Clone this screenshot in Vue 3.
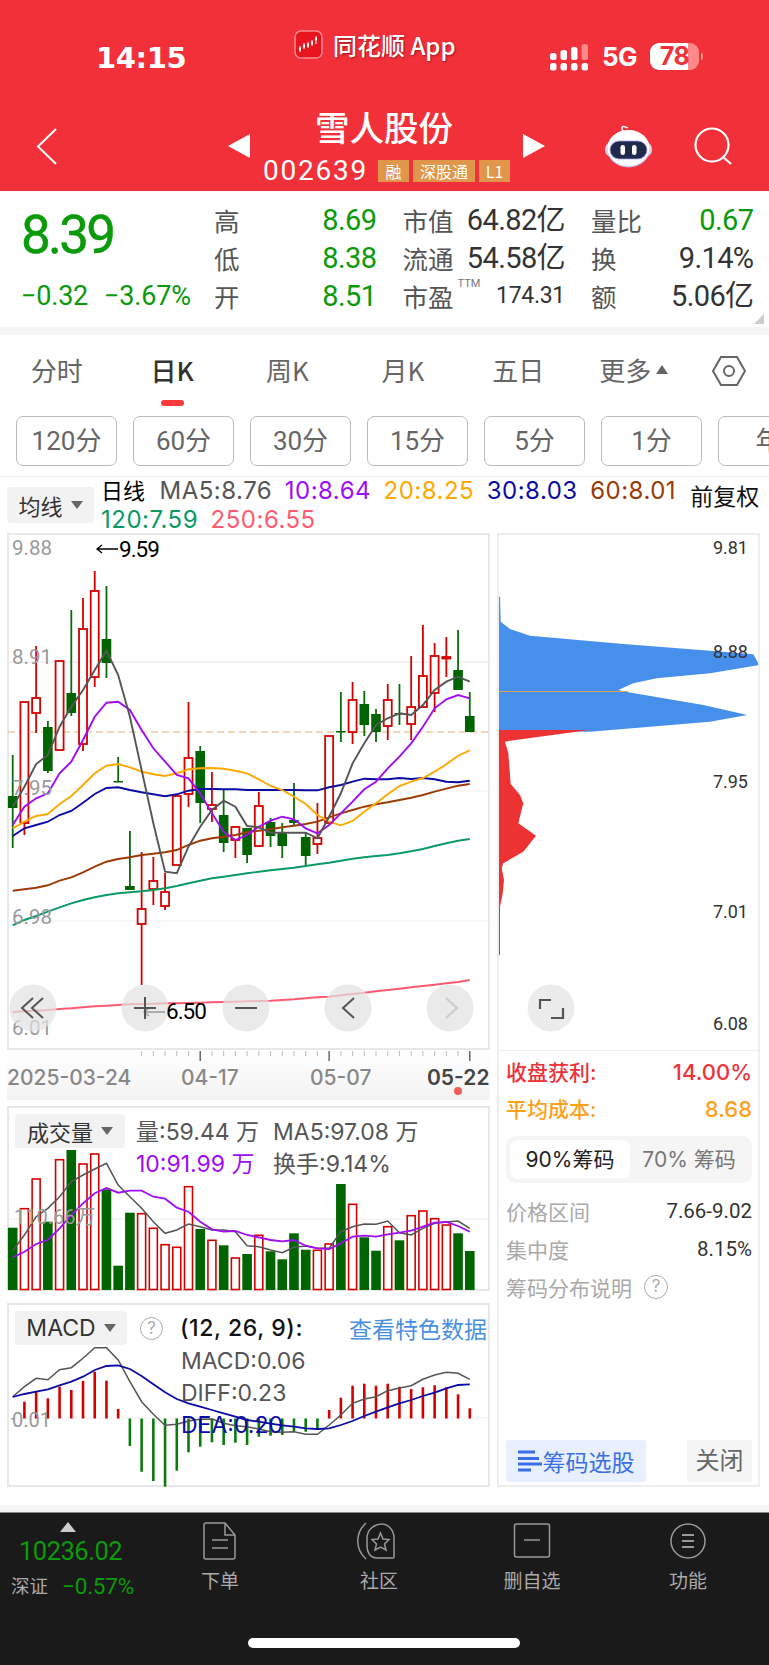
<template>
  <div class="page">
    <header class="header">
      <div class="status-bar">
        <span class="time">14:15</span>
        <div class="app-name">
          <svg class="app-logo" width="29" height="29" viewBox="0 0 29 29">
            <rect x="1" y="1" width="27" height="27" rx="6" fill="#e8141f" stroke="#f98a8f" stroke-width="1.5" />
            <path d="M5 19h2M9 16h2M13 15h2M17 13h2M21 9h2" stroke="#fff" stroke-width="3" />
            <path d="M6 16v6M10 13v6M14 12v6M18 10v6M22 6v8" stroke="#fff" stroke-width="1" />
          </svg>
          <span>同花顺 App</span>
        </div>
        <div class="signal">
          <svg width="38" height="27" viewBox="0 0 38 27">
            <g fill="#fff">
              <rect x="0" y="9" width="6.500" height="7" rx="2.500" />
              <rect x="0" y="19" width="6.500" height="7.500" rx="2.500" />
              <rect x="10.500" y="6" width="6.500" height="10" rx="2.500" />
              <rect x="10.500" y="19" width="6.500" height="7.500" rx="2.500" />
              <rect x="21" y="3" width="6.500" height="13" rx="2.500" />
              <rect x="21" y="19" width="6.500" height="7.500" rx="2.500" />
              <rect x="31.500" y="19" width="6.500" height="7.500" rx="2.500" />
            </g>
            <rect x="31.500" y="0" width="6.500" height="16" rx="2.500" fill="#f88" />
          </svg>
        </div>
        <span class="net">5G</span>
        <div class="battery"><span>78</span></div>
      </div>

      <div class="nav">
        <svg class="back" width="21" height="37" viewBox="0 0 21 37">
          <polyline points="20,1 2,18.5 20,36" fill="none" stroke="#fff" stroke-width="2" />
        </svg>
        <svg class="prev" width="22" height="24" viewBox="0 0 22 24"><polygon points="22,0 22,24 0,12" fill="#fff" /></svg>
        <div class="stock">
          <div class="stock-name">雪人股份</div>
          <div class="stock-code">
            <span class="code">002639</span>
            <span class="tag tag-1">融</span>
            <span class="tag tag-3">深股通</span>
            <span class="tag tag-1">L1</span>
          </div>
        </div>
        <svg class="next" width="22" height="24" viewBox="0 0 22 24"><polygon points="0,0 0,24 22,12" fill="#fff" /></svg>
        <svg class="robot" width="47" height="44" viewBox="0 0 47 44">
          <path d="M18 7c-1.500-2-1.500-4 0-4.500s3 1 5 1.500" fill="none" stroke="#f1eefb" stroke-width="1.600" />
          <rect x="0" y="18" width="47" height="15" rx="7" fill="#d8d6ea" />
          <ellipse cx="23.500" cy="25" rx="21.500" ry="18.500" fill="#c9bdf5" />
          <ellipse cx="23.500" cy="24" rx="21" ry="18" fill="#fff" />
          <rect x="5" y="17" width="37" height="18" rx="9" fill="#1f2a4a" stroke="#a99cf0" stroke-width="0.800" />
          <rect x="15.500" y="21" width="4.500" height="10" rx="2.200" fill="#fff" />
          <rect x="27" y="21" width="4.500" height="10" rx="2.200" fill="#fff" />
        </svg>
        <svg class="search" width="39" height="38" viewBox="0 0 39 38">
          <circle cx="18" cy="18" r="16.5" fill="none" stroke="#fff" stroke-width="2.2" />
          <line x1="29" y1="30" x2="37" y2="37" stroke="#fff" stroke-width="2.2" />
        </svg>
      </div>
    </header>

    <section class="quote">
      <div class="quote-main">
        <div class="last-price">8.39</div>
        <div class="change"><span>−0.32</span><span>−3.67%</span></div>
      </div>
      <div class="quote-grid">
        <div v-for="item in quoteCells" :key="item.label" class="cell">
          <span class="cell-label">{{ item.label }}</span>
          <span v-if="item.ttm" class="ttm">TTM</span>
          <span class="cell-value" :class="[item.tone, { small: item.ttm }]">{{ item.value }}</span>
        </div>
      </div>
      <i class="corner"></i>
    </section>

    <div class="band"></div>

    <nav class="tabs">
      <div v-for="tab in tabs" :key="tab" class="tab" :class="{ active: tab === '日K' }">
        <span class="tab-text">{{ tab }}<i v-if="tab === '更多'" class="tab-caret"></i></span>
        <i class="tab-bar"></i>
      </div>
      <svg class="hex" width="34" height="30" viewBox="0 0 34 30">
        <polygon points="1,15 9,1 25,1 33,15 25,29 9,29" fill="none" stroke="#666" stroke-width="2" />
        <circle cx="17" cy="15" r="5" fill="none" stroke="#666" stroke-width="2" />
      </svg>
    </nav>

    <div class="periods">
      <span v-for="p in periods" :key="p" class="period">{{ p }}</span>
    </div>

    <div class="legend-row">
      <div class="select select-ma">均线<i class="caret"></i></div>
      <div class="legend">
        <div class="legend-line">
          <span class="legend-title">日线</span>
          <span style="color: #555">MA5:8.76</span>
          <span style="color: #a00cf5">10:8.64</span>
          <span style="color: #ffa800">20:8.25</span>
          <span style="color: #0a0aa5">30:8.03</span>
          <span style="color: #9c3a05">60:8.01</span>
        </div>
        <div class="legend-line">
          <span style="color: #0a9a64">120:7.59</span>
          <span style="color: #ff5a70">250:6.55</span>
        </div>
      </div>
      <span class="adjust">前复权</span>
    </div>

    <div class="charts">
      <div class="left-col">
        <svg class="kline" width="483" height="517" viewBox="7 533 483 517">
          <rect x="8" y="534" width="481" height="515" fill="#fff" stroke="#e8e8e8" stroke-width="2" />
          <line x1="8" y1="662" x2="489" y2="662" stroke="#eee" stroke-width="1.5" />
          <line x1="8" y1="791" x2="489" y2="791" stroke="#f0f0f0" />
          <line x1="8" y1="921" x2="489" y2="921" stroke="#f0f0f0" />
          <line x1="8" y1="732" x2="489" y2="732" stroke="#e3b27c" stroke-dasharray="7 4" />

          <g v-for="c in candles" :key="c.i">
            <line :x1="c.x" :x2="c.x" :y1="c.high" :y2="c.low" :stroke="c.up ? '#d40000' : '#0a6b0a'" stroke-width="1.8" />
            <rect v-if="c.up" :x="c.x - 4" :y="c.top" width="8" :height="c.bottom - c.top" fill="#fff" stroke="#d40000" stroke-width="1.8" />
            <rect v-else :x="c.x - 4.8" :y="c.top" width="9.6" :height="Math.max(c.bottom - c.top, 1.5)" fill="#006400" />
          </g>

          <polyline v-for="l in maLines" :key="l.color" :points="l.points" fill="none" :stroke="l.color" stroke-width="1.9" />

          <g class="axis-left">
            <text x="12" y="555">9.88</text>
            <text x="12" y="664">8.91</text>
            <text x="12" y="795">7.95</text>
            <text x="12" y="924">6.98</text>
            <text x="12" y="1035">6.01</text>
          </g>
          <path d="M97 549h21M102 545l-5 4 5 4" fill="none" stroke="#000" stroke-width="1.3" />
          <text class="mark" x="119" y="557">9.59</text>

          <g fill="#e2e2e2" fill-opacity="0.72">
            <circle cx="33" cy="1008" r="23.5" />
            <circle cx="145" cy="1008" r="23.5" />
            <circle cx="246" cy="1008" r="23.5" />
            <circle cx="348" cy="1008" r="23.5" />
            <circle cx="450" cy="1008" r="23.5" />
          </g>
          <path d="M144 1012h21M149 1008l-5 4 5 4" fill="none" stroke="#999" stroke-width="1.3" />
          <text class="mark" x="166" y="1019">6.50</text>
          <g fill="none" stroke="#555" stroke-width="2">
            <path d="M33 998l-11 10 11 10M43 998l-11 10 11 10" />
            <path d="M134 1008h22M145 997v22" />
            <path d="M235 1008h22" />
            <path d="M354 998l-11 10 11 10" />
            <path d="M446 998l11 10-11 10" stroke="#ccc" />
          </g>
        </svg>

        <svg class="dates" width="483" height="50" viewBox="7 1050 483 50">
          <line v-for="t in ticks" :key="t.x" :x1="t.x" :x2="t.x" y1="1051" :y2="t.major ? 1061 : 1056" :stroke="t.major ? '#666' : '#bbb'" :stroke-width="t.major ? 1.5 : 1" />
          <text x="7" y="1085">2025-03-24</text>
          <text x="181" y="1085">04-17</text>
          <text x="310" y="1085">05-07</text>
          <text class="date-now" x="427" y="1085">05-22</text>
          <circle cx="458" cy="1091" r="4" fill="#f45b5b" />
        </svg>

        <div class="sub-chart vol-chart">
          <svg class="sub-canvas" width="483" height="185" viewBox="7 1106 483 185">
            <line x1="8" y1="1219" x2="489" y2="1219" stroke="#eee" />
            <g v-for="b in volBars" :key="b.x">
              <rect v-if="b.up" :x="b.x - 4" :y="b.top" width="8" :height="1289.5 - b.top" fill="#fff" stroke="#d40000" stroke-width="1.6" />
              <rect v-else :x="b.x - 4.8" :y="b.top" width="9.6" :height="1290 - b.top" fill="#006400" />
            </g>
            <polyline :points="volMa5" fill="none" stroke="#555" stroke-width="1.5" />
            <polyline :points="volMa10" fill="none" stroke="#a00cf5" stroke-width="1.8" />
            <text class="sub-axis" x="14" y="1224">110.66万</text>
          </svg>
          <div class="sub-head">
            <div class="select select-vol">成交量<i class="caret"></i></div>
            <div class="vol-legend">
              <span>量:59.44 万</span>
              <span>MA5:97.08 万</span>
              <span style="color: #a00cf5">10:91.99 万</span>
              <span>换手:9.14%</span>
            </div>
          </div>
        </div>

        <div class="sub-chart macd-chart">
          <svg class="sub-canvas" width="483" height="184" viewBox="7 1303 483 184">
            <line x1="8" y1="1418" x2="489" y2="1418" stroke="#eee" />
            <line v-for="b in macdBars" :key="b.x" :x1="b.x" :x2="b.x" y1="1418.5" :y2="b.end" :stroke="b.up ? '#d40000' : '#0a7a0a'" stroke-width="2.6" />
            <polyline :points="macdDiff" fill="none" stroke="#555" stroke-width="1.5" />
            <polyline :points="macdDea" fill="none" stroke="#0a0aa5" stroke-width="1.8" />
            <text class="sub-axis" x="12" y="1427">0.01</text>
          </svg>
          <div class="macd-head">
            <div class="select select-macd">MACD<i class="caret"></i></div>
            <span class="help help-macd">?</span>
            <span class="macd-params">(12, 26, 9):</span>
            <span class="macd-link">查看特色数据</span>
          </div>
          <div class="macd-values">
            <div>MACD:0.06</div>
            <div>DIFF:0.23</div>
            <div class="dea">DEA:0.20</div>
          </div>
        </div>
      </div>

      <aside class="right-col">
        <svg class="chips" width="259" height="515" viewBox="499 535 259 515">
          <polygon :points="chipBlue" fill="#4690ec" />
          <polygon :points="chipRed" fill="#ec3232" />
          <line x1="498" y1="691.5" x2="628" y2="691.5" stroke="#dba04f" stroke-width="1.2" />
          <g class="axis-right">
            <text x="748" y="554">9.81</text>
            <text x="748" y="658">8.88</text>
            <text x="748" y="788">7.95</text>
            <text x="748" y="918">7.01</text>
            <text x="748" y="1030">6.08</text>
          </g>
          <circle cx="551" cy="1008" r="23.5" fill="#ececec" />
          <path d="M540 1009v-9h11M563 1008v10h-12" fill="none" stroke="#555" stroke-width="2.2" />
        </svg>

        <div class="chip-info">
          <div class="info-row profit"><span>收盘获利:</span><span class="info-num">14.00%</span></div>
          <div class="info-row cost"><span>平均成本:</span><span class="info-num">8.68</span></div>
          <div class="segment">
            <span class="seg-item seg-active">90%筹码</span>
            <span class="seg-item">70% 筹码</span>
          </div>
          <div class="stat-row"><span>价格区间</span><b>7.66-9.02</b></div>
          <div class="stat-row"><span>集中度</span><b>8.15%</b></div>
          <div class="stat-row stat-help"><span>筹码分布说明</span><span class="help">?</span></div>
          <div class="chip-actions">
            <div class="pick">
              <svg width="24" height="23" viewBox="0 0 24 23">
                <path d="M0 2h17M0 8.500h21M0 14h24M0 20h13" stroke="#3b6fe8" stroke-width="3" />
              </svg>
              <span>筹码选股</span>
            </div>
            <div class="close">关闭</div>
          </div>
        </div>
      </aside>
    </div>

    <div class="band band-bottom"></div>

    <footer class="footer">
      <div class="footer-row">
        <div class="index">
          <i class="index-up"></i>
          <div class="index-price">10236.02</div>
          <div class="index-line"><span class="index-name">深证</span><span class="index-pct">−0.57%</span></div>
        </div>
        <div class="foot-item">
          <svg width="34" height="38" viewBox="0 0 34 38" fill="none" stroke="#999" stroke-width="1.5">
            <path d="M3 1h19l10 12v22a2 2 0 0 1-2 2H3a2 2 0 0 1-2-2V3a2 2 0 0 1 2-2z" />
            <path d="M22 1v12h10M9 18h16M9 26h16" />
          </svg>
          <span>下单</span>
        </div>
        <div class="foot-item foot-social">
          <svg width="40" height="38" viewBox="0 0 40 38" fill="none" stroke="#999" stroke-width="1.5">
            <path d="M10 1C-1 11-1 27 10 37" />
            <path d="M26 2c6 0 12 6 12 14v19a1 1 0 0 1-1 1H21C14 36 11 30 11 24v-8C11 8 18 2 26 2z" />
            <polygon points="24.500,11 27,17 33,17.500 28.500,22 30,28 24.500,25 19,28 20.500,22 16,17.500 22,17" />
          </svg>
          <span>社区</span>
        </div>
        <div class="foot-item">
          <svg width="38" height="38" viewBox="0 0 38 38" fill="none" stroke="#999" stroke-width="1.5">
            <rect x="1.500" y="2" width="35" height="33" rx="2" />
            <path d="M11 18h16" />
          </svg>
          <span>删自选</span>
        </div>
        <div class="foot-item">
          <svg width="36" height="38" viewBox="0 0 36 38" fill="none" stroke="#999" stroke-width="1.5">
            <circle cx="18" cy="19" r="17" />
            <path d="M12 13h12M12 19h12M12 25h12" stroke-width="2" />
          </svg>
          <span>功能</span>
        </div>
      </div>
      <div class="home-bar"></div>
    </footer>
  </div>
</template>

<script setup>
const quoteCells = [
  { label: "高", value: "8.69", tone: "green" },
  { label: "市值", value: "64.82亿" },
  { label: "量比", value: "0.67", tone: "green" },
  { label: "低", value: "8.38", tone: "green" },
  { label: "流通", value: "54.58亿" },
  { label: "换", value: "9.14%" },
  { label: "开", value: "8.51", tone: "green" },
  { label: "市盈", value: "174.31", ttm: true },
  { label: "额", value: "5.06亿" },
];
const tabs = ["分时", "日K", "周K", "月K", "五日", "更多"];
const periods = ["120分", "60分", "30分", "15分", "5分", "1分", "年"];

const xAt = (i) => +(12.7 + i * 11.72).toFixed(2);
const toPoints = (arr, base) =>
  arr.map((z, i) => `${xAt(i)},${(base + z / 3).toFixed(1)}`).join(" ");

// i: [high, bodyTop, bodyBottom, low, up]
const candleData = [
  [755, 796, 808, 848, 0],
  [702, 702, 823, 835, 1],
  [646, 698, 713, 733, 1],
  [721, 727, 771, 773, 0],
  [661, 661, 750, 750, 1],
  [610, 693, 713, 716, 0],
  [598, 629, 744, 751, 1],
  [571, 591, 677, 687, 1],
  [586, 639, 663, 678, 0],
  [757, 781, 782.5, 782, 0],
  [831, 886, 890, 890, 0],
  [852, 909, 924, 985, 1],
  [857, 881, 889, 905, 1],
  [873, 892, 906, 910, 1],
  [796, 796, 865, 865, 1],
  [702, 758, 794, 807, 1],
  [746, 751, 803, 823, 0],
  [772, 805, 809, 822, 1],
  [790, 815, 843, 852, 0],
  [826, 827, 840, 858, 1],
  [828, 828, 855, 863, 0],
  [792, 806, 846, 847, 1],
  [818, 822, 836, 847, 0],
  [823, 832, 846, 858, 0],
  [783, 820, 823, 826, 0],
  [832, 837, 856, 865, 0],
  [803, 838, 844, 854, 1],
  [736, 736, 823, 823, 1],
  [692, 731, 732.5, 742, 0],
  [682, 700, 732, 744, 1],
  [691, 704, 725, 736, 0],
  [709, 714, 732, 742, 0],
  [684, 700, 726, 740, 1],
  [684, 713, 714.5, 725, 0],
  [656, 707, 724, 740, 1],
  [625, 676, 707, 707, 1],
  [643, 656, 693, 712, 1],
  [637, 657, 658.5, 677, 1],
  [630, 670, 690, 690, 0],
  [692, 716, 732, 732, 0],
];
const candles = candleData.map((d, i) => ({
  i,
  x: xAt(i),
  high: d[0],
  top: d[1],
  bottom: d[2],
  low: d[3],
  up: d[4] === 1,
}));

const ma5 = [830, 770, 702, 675, 590, 530, 480, 420, 362, 435, 560, 720, 880, 1025, 1030, 950, 890, 840, 812, 830, 888, 892, 908, 908, 908, 908, 925, 860, 790, 700, 640, 585, 565, 550, 555, 525, 480, 455, 440, 455];
const ma10 = [885, 830, 805, 790, 730, 695, 630, 560, 518, 515, 540, 600, 655, 695, 735, 745, 790, 850, 905, 930, 915, 890, 872, 860, 868, 895, 910, 885, 850, 815, 778, 755, 715, 680, 640, 590, 535, 508, 495, 505];
const ma20 = [895, 875, 858, 852, 822, 798, 765, 730, 707, 702, 712, 725, 733, 738, 730, 718, 715, 714, 716, 722, 730, 748, 768, 780, 800, 822, 855, 875, 886, 873, 845, 820, 793, 768, 755, 744, 725, 703, 677, 661];
const ma30 = [918, 895, 885, 875, 855, 843, 818, 792, 774, 772, 780, 787, 793, 799, 793, 782, 777, 777, 778, 778, 780, 780, 780, 780, 780, 781, 781, 772, 765, 755, 746, 748, 748, 744, 747, 744, 748, 755, 757, 752];
const ma60 = [212, 208, 203, 196, 182, 172, 157, 140, 125, 117, 112, 105, 101, 97, 90, 75, 62, 55, 50, 45, 37, 32, 28, 22, 17, 12, 5, -8, -20, -30, -40, -47, -53, -60, -67, -75, -85, -94, -103, -108];
const ma120 = [316, 300, 288, 275, 262, 250, 240, 232, 225, 220, 217, 214, 210, 205, 198, 190, 182, 175, 170, 165, 160, 155, 151, 147, 143, 138, 133, 128, 122, 116, 112, 108, 105, 100, 94, 87, 78, 70, 62, 57];
const ma250 = [576, 574, 572, 570, 567, 565, 562, 559, 557, 555, 553, 552, 551, 550, 550, 549, 548, 547, 546, 545, 544, 543, 542, 540, 538, 535, 532, 530, 526, 522, 518, 514, 510, 506, 502, 498, 494, 490, 486, 480];

const maLines = [
  { color: "#ff5a70", points: toPoints(ma250, 820) },
  { color: "#0a9a64", points: toPoints(ma120, 820) },
  { color: "#9c3a05", points: toPoints(ma60, 820) },
  { color: "#0a0aa5", points: toPoints(ma30, 530) },
  { color: "#ffa800", points: toPoints(ma20, 530) },
  { color: "#a00cf5", points: toPoints(ma10, 530) },
  { color: "#555555", points: toPoints(ma5, 530) },
];

const ticks = candles.slice(11).map((c) => ({
  x: c.x,
  major: c.i === 16 || c.i === 27 || c.i === 39,
}));

const volTops = [383, 326, 237, 365, 179, 150, 192, 162, 268, 497, 338, 341, 385, 434, 442, 260, 387, 421, 436, 474, 462, 406, 454, 478, 400, 449, 451, 432, 252, 313, 412, 452, 380, 421, 347, 333, 356, 375, 400, 453];
const volBars = volTops.map((z, i) => ({
  x: xAt(i),
  top: +(1100 + z / 3).toFixed(1),
  up: candleData[i][4] === 1,
}));
const volMa5 = toPoints([452, 405, 350, 325, 290, 245, 225, 207, 190, 255, 290, 325, 365, 400, 390, 372, 380, 390, 390, 395, 437, 440, 450, 458, 442, 438, 445, 445, 395, 380, 372, 373, 363, 398, 405, 385, 370, 366, 363, 385], 1100);
const volMa10 = toPoints([472, 455, 432, 420, 385, 345, 310, 280, 264, 278, 272, 272, 290, 296, 323, 335, 365, 388, 395, 393, 405, 412, 420, 424, 420, 437, 445, 447, 430, 410, 407, 410, 403, 398, 392, 380, 368, 366, 378, 395], 1100);

const macdEnds = [373, 320, 290, 310, 275, 285, 258, 230, 257, 342, 453, 530, 558, 575, 527, 472, 455, 442, 450, 443, 450, 425, 422, 420, 408, 410, 405, 345, 308, 272, 266, 272, 266, 275, 282, 277, 271, 277, 298, 340];
const macdBars = macdEnds.map((z, i) => ({
  x: xAt(i),
  end: +(1295 + z / 3).toFixed(1),
  up: z < 370,
}));
const macdDiff = toPoints([305, 275, 250, 254, 224, 218, 190, 158, 158, 195, 260, 320, 358, 391, 388, 378, 373, 372, 385, 392, 395, 402, 410, 412, 410, 418, 418, 390, 360, 325, 312, 305, 287, 279, 272, 253, 240, 232, 235, 253], 1295);
const macdDea = toPoints([306, 297, 290, 283, 271, 260, 245, 225, 213, 211, 222, 243, 268, 292, 312, 325, 335, 345, 355, 365, 375, 380, 386, 391, 395, 400, 402, 400, 390, 378, 363, 350, 337, 325, 315, 303, 293, 280, 270, 268], 1295);

const chipPoints = (pts) =>
  pts.map(([x, y]) => `${(490 + x / 3).toFixed(1)},${(530 + y / 3).toFixed(1)}`).join(" ");
const chipBlue = chipPoints([[25, 200], [30, 200], [32, 275], [60, 297], [120, 317], [400, 342], [660, 362], [790, 373], [808, 405], [660, 430], [500, 445], [430, 460], [385, 480], [415, 487], [640, 525], [772, 555], [660, 575], [300, 605], [25, 600]]);
const chipRed = chipPoints([[25, 600], [298, 600], [60, 632], [45, 635], [55, 670], [62, 762], [90, 795], [100, 820], [85, 880], [138, 917], [100, 965], [40, 1000], [35, 1015], [42, 1050], [38, 1090], [30, 1130], [30, 1275], [25, 1275]]);
</script>

<style>
html,
body {
  margin: 0;
  background: #fff;
}
</style>

<style scoped>
.page {
  width: 769px;
  height: 1665px;
  overflow: hidden;
  display: flex;
  flex-direction: column;
  background: #fff;
  font-family: "Inter", "Noto Sans CJK SC", sans-serif;
}

/* header */
.header {
  height: 191px;
  flex: none;
  background: #f2303a;
  color: #fff;
}
.status-bar {
  height: 105px;
  display: flex;
  align-items: flex-start;
  padding-left: 96px;
}
.time {
  margin-top: 41px;
  font: 700 29px/34px "DejaVu Sans", sans-serif;
  letter-spacing: -0.4px;
  width: 88px;
  white-space: nowrap;
}
.app-name {
  margin: 30px 0 0 110px;
  width: 256px;
  display: flex;
  align-items: center;
  gap: 10px;
  font: 500 24px/29px "Noto Sans CJK SC", sans-serif;
  text-shadow: 1px 1px 2px rgba(80, 0, 0, 0.5);
}
.signal {
  margin-top: 44px;
  height: 27px;
}
.net {
  margin: 40px 0 0 14px;
  font: 700 26px/34px "Inter", sans-serif;
  letter-spacing: -0.5px;
  width: 48px;
}
.battery {
  position: relative;
  margin-top: 43px;
  width: 49px;
  height: 27px;
  border-radius: 9px;
  background: linear-gradient(90deg, #fff 78%, #f88 78%);
  color: #f2303a;
  text-align: center;
  font: 700 25px/27px "Inter", sans-serif;
  letter-spacing: -0.5px;
}
.battery::after {
  content: "";
  position: absolute;
  left: 51px;
  top: 10px;
  width: 2px;
  height: 7px;
  border-radius: 0 2px 2px 0;
  background: #f88;
}
.nav {
  height: 86px;
  display: flex;
  align-items: center;
  padding: 0 0 4px 36px;
  box-sizing: border-box;
}
.prev {
  margin-left: 171px;
}
.stock {
  width: 273px;
  align-self: flex-start;
  display: flex;
  flex-direction: column;
  align-items: center;
}
.stock-name {
  font: 500 34.500px/42px "Noto Sans CJK SC", sans-serif;
  margin-right: 5px;
}
.stock-code {
  margin-top: 13px;
  height: 22px;
  display: flex;
  align-items: center;
  gap: 4px;
}
.code {
  font: 400 28px/22px "Roboto", sans-serif;
  letter-spacing: 1.8px;
  margin-right: 6px;
}
.tag {
  height: 22px;
  background: #e0964b;
  font: 400 16px/22px "Noto Sans CJK SC", sans-serif;
  text-align: center;
}
.tag-1 {
  width: 31px;
}
.tag-3 {
  width: 62px;
}
.robot {
  margin-left: 60px;
}
.search {
  margin-left: 42px;
}

/* quote */
.quote {
  position: relative;
  height: 136px;
  flex: none;
  display: flex;
  box-sizing: border-box;
  padding: 10px 0 0 21px;
}
.quote-main {
  width: 193px;
  color: #0a9a0a;
  font-family: "Roboto", sans-serif;
}
.last-price {
  margin-top: 4px;
  font-size: 53px;
  line-height: 60px;
  letter-spacing: -2.8px;
  -webkit-text-stroke: 0.5px #0a9a0a;
}
.change {
  margin-top: 14px;
  display: flex;
  gap: 16px;
  font-size: 27px;
  line-height: 34px;
  letter-spacing: -0.2px;
  white-space: nowrap;
}
.quote-grid {
  display: grid;
  grid-template-columns: repeat(3, 162.5px);
  column-gap: 26px;
  grid-auto-rows: 38px;
}
.cell {
  display: flex;
  align-items: center;
  position: relative;
}
.cell-label {
  font: 400 25.500px/38px "Noto Sans CJK SC", sans-serif;
  color: #555;
}
.cell-value {
  margin-left: auto;
  font: 400 29px/38px "Roboto", "Noto Sans CJK SC", sans-serif;
  color: #333;
  white-space: nowrap;
  letter-spacing: -0.6px;
}
.cell-value.green {
  color: #0a9a0a;
}
.cell-value.small {
  font-size: 23px;
  letter-spacing: -0.3px;
}
.ttm {
  position: absolute;
  left: 55px;
  top: 0;
  font: 400 11px/14px "Roboto", sans-serif;
  color: #777;
}
.corner {
  position: absolute;
  right: 5px;
  bottom: 3px;
  width: 0;
  height: 0;
  border-left: 10px solid transparent;
  border-bottom: 10px solid #ccc;
}
.band {
  height: 8px;
  flex: none;
  background: #f5f5f5;
}

/* tabs */
.tabs {
  flex: none;
  display: flex;
  height: 71px;
  box-sizing: border-box;
  padding-top: 18px;
  margin-left: -1px;
  color: #666;
}
.tab {
  width: 115.400px;
  display: flex;
  flex-direction: column;
  align-items: center;
}
.tab-text {
  font: 400 26px/33px "Noto Sans CJK SC", sans-serif;
  white-space: nowrap;
  display: flex;
  align-items: center;
}
.tab-caret {
  margin-left: 5px;
  border-left: 6px solid transparent;
  border-right: 6px solid transparent;
  border-bottom: 9px solid #666;
}
.tab-bar {
  width: 23px;
  height: 6px;
  margin-top: 14px;
  border-radius: 3px;
}
.tab.active .tab-text {
  color: #333;
  font-weight: 500;
}
.tab.active .tab-bar {
  background: #f93a3a;
}
.hex {
  margin: 3px 0 0 21px;
}
.periods {
  flex: none;
  height: 71px;
  box-sizing: border-box;
  padding: 10px 0 0 16px;
  display: flex;
  gap: 16px;
  overflow: hidden;
  border-bottom: 1px solid #eee;
}
.period {
  flex: none;
  width: 101px;
  height: 50px;
  box-sizing: border-box;
  border: 1px solid #bbb;
  border-radius: 7px;
  text-align: center;
  color: #666;
  font: 400 26px/48px "Roboto", "Noto Sans CJK SC", sans-serif;
}

/* legend */
.legend-row {
  flex: none;
  height: 56px;
  display: flex;
  align-items: flex-start;
  padding-left: 7px;
  position: relative;
}
.select {
  display: flex;
  align-items: center;
  justify-content: center;
  background: #f2f2f2;
  border-radius: 4px;
  color: #333;
  font-family: "Inter", "Noto Sans CJK SC", sans-serif;
  box-sizing: border-box;
  white-space: nowrap;
}
.caret {
  margin-left: 8px;
  border-left: 6px solid transparent;
  border-right: 6px solid transparent;
  border-top: 8px solid #666;
}
.select-ma {
  width: 87px;
  height: 36px;
  margin-top: 10px;
  font-size: 22px;
}
.legend {
  margin-left: 7px;
  padding-top: 1px;
}
.legend-line {
  display: flex;
  gap: 12.500px;
  font-size: 24px;
  line-height: 26px;
  height: 29px;
  white-space: nowrap;
  letter-spacing: 0.5px;
}
.legend-title {
  color: #000;
  font-size: 22px;
  letter-spacing: 0;
  margin-right: 2px;
}
.adjust {
  margin: 7px 0 0 14px;
  font-size: 23px;
  line-height: 26px;
  color: #111;
  white-space: nowrap;
}

/* charts */
.charts {
  flex: none;
  height: 954px;
  display: grid;
  grid-template-columns: 483px 263px;
  column-gap: 7px;
  padding-left: 7px;
}
.left-col {
  display: flex;
  flex-direction: column;
}
.kline,
.dates,
.chips {
  display: block;
  flex: none;
}
.axis-left text {
  fill: #999;
  font: 400 20.500px "Roboto", sans-serif;
}
.mark {
  fill: #000;
  font: 400 22.500px "Roboto", sans-serif;
  letter-spacing: -1px;
}
.dates {
  background: linear-gradient(180deg, #fff 0%, #f3f3f3 100%);
  margin-bottom: 6px;
}
.dates text {
  fill: #888;
  font: 500 21px "Inter", sans-serif;
}
.dates .date-now {
  fill: #444;
  font-weight: 600;
}
.sub-chart {
  position: relative;
  box-sizing: border-box;
  border: 2px solid #e8e8e8;
  flex: none;
}
.sub-canvas {
  position: absolute;
  left: -2px;
  top: -2px;
}
.sub-axis {
  fill: #999;
  font: 400 20px "Roboto", "Noto Sans CJK SC", sans-serif;
}
.vol-chart {
  height: 185px;
  margin-bottom: 12px;
}
.sub-head {
  position: relative;
  display: flex;
  padding: 6px 0 0 6px;
}
.select-vol {
  width: 110px;
  height: 34px;
  font-size: 22px;
}
.vol-legend {
  margin: 2px 0 0 11px;
  display: grid;
  grid-template-columns: 137px auto;
  grid-auto-rows: 32px;
  color: #555;
  font-size: 23px;
  line-height: 32px;
  white-space: nowrap;
}
.macd-chart {
  height: 184px;
}
.macd-head {
  position: relative;
  display: flex;
  align-items: center;
  padding: 6px 1px 0 6px;
}
.select-macd {
  width: 112px;
  height: 34px;
  font-size: 23px;
}
.help {
  flex: none;
  width: 23px;
  height: 23px;
  box-sizing: border-box;
  border: 1.5px solid #aaa;
  border-radius: 50%;
  color: #aaa;
  font: 400 17px/20px "Inter", sans-serif;
  text-align: center;
}
.help-macd {
  margin-left: 13px;
}
.macd-params {
  margin-left: 17px;
  font-size: 23px;
  font-weight: 500;
  letter-spacing: 0.6px;
  color: #111;
  white-space: nowrap;
}
.macd-link {
  margin-left: auto;
  font-size: 23px;
  color: #4a90e2;
  white-space: nowrap;
}
.macd-values {
  position: relative;
  margin: 0 0 0 172px;
  color: #555;
  font-size: 23px;
  line-height: 32px;
}
.macd-values .dea {
  color: #0a0aa5;
}

/* right panel */
.right-col {
  box-sizing: border-box;
  border: 2px solid #eee;
  display: flex;
  flex-direction: column;
}
.axis-right text {
  fill: #333;
  font: 400 18px "Roboto", sans-serif;
  text-anchor: end;
}
.chip-info {
  flex: 1;
  border-top: 1px solid #eee;
  box-sizing: border-box;
  padding: 3px 6px 3px 7px;
  display: flex;
  flex-direction: column;
}
.info-row {
  display: flex;
  justify-content: space-between;
  font-size: 21px;
  line-height: 37px;
  font-weight: 500;
}
.info-num {
  font: 500 22px/37px "Inter", sans-serif;
}
.profit {
  color: #ee3338;
}
.cost {
  color: #ff9f1c;
}
.segment {
  margin: 8px 0 9px;
  height: 47px;
  background: #f5f5f5;
  border-radius: 10px;
  padding: 4px;
  box-sizing: border-box;
  display: flex;
  align-items: stretch;
}
.seg-item {
  flex: 1;
  color: #777;
  text-align: center;
  font-size: 21px;
  line-height: 39px;
  border-radius: 8px;
  white-space: nowrap;
}
.seg-active {
  flex: none;
  width: 120px;
  background: #fff;
  color: #222;
}
.stat-row {
  display: flex;
  justify-content: space-between;
  align-items: center;
  height: 38px;
  color: #aaa;
  font-size: 21px;
}
.stat-row b {
  font: 400 20.500px "Roboto", sans-serif;
  color: #333;
}
.stat-help {
  justify-content: flex-start;
  gap: 12px;
}
.stat-help .help {
  width: 24px;
  height: 24px;
  font-size: 17px;
  line-height: 21px;
}
.chip-actions {
  margin-top: auto;
  display: flex;
  justify-content: space-between;
}
.pick {
  width: 140px;
  height: 42px;
  background: #e8effe;
  border-radius: 3px;
  color: #3b6fe8;
  font-size: 23px;
  display: flex;
  align-items: center;
  justify-content: center;
  gap: 1px;
}
.close {
  width: 65px;
  height: 42px;
  background: #f5f5f5;
  border-radius: 3px;
  color: #666;
  font-size: 24px;
  line-height: 42px;
  text-align: center;
}

/* footer */
.band-bottom {
  margin-top: 18px;
  height: 7px;
}
.footer {
  flex: 1;
  background: #1a1a1a;
  border-top: 1px solid #888;
}
.footer-row {
  height: 125px;
  display: flex;
}
.index {
  width: 142px;
  flex: none;
  position: relative;
  padding-top: 9px;
  box-sizing: border-box;
  white-space: nowrap;
}
.index-up {
  display: block;
  width: 0;
  margin-left: 60px;
  border-left: 8.500px solid transparent;
  border-right: 8.500px solid transparent;
  border-bottom: 10px solid #ccc;
}
.index-price {
  margin: 3px 0 0 19px;
  color: #0a9a0a;
  font: 400 25.500px/32px "Roboto", sans-serif;
  letter-spacing: -0.5px;
}
.index-line {
  margin: 4px 0 0 11px;
  display: flex;
  align-items: center;
  gap: 14px;
}
.index-name {
  color: #aaa;
  font-size: 18.500px;
  line-height: 30px;
}
.index-pct {
  color: #0a9a0a;
  font: 400 22.500px/30px "Roboto", sans-serif;
  letter-spacing: -0.2px;
}
.foot-item {
  width: 156px;
  flex: none;
  padding-top: 9px;
  box-sizing: border-box;
  display: flex;
  flex-direction: column;
  align-items: center;
  color: #aaa;
  font-size: 19px;
  line-height: 24px;
}
.foot-item span {
  margin-top: 10px;
}
.foot-social span {
  margin-left: 6px;
}
.home-bar {
  width: 272px;
  height: 10px;
  margin-left: 248px;
  border-radius: 5px;
  background: #fff;
}
</style>
